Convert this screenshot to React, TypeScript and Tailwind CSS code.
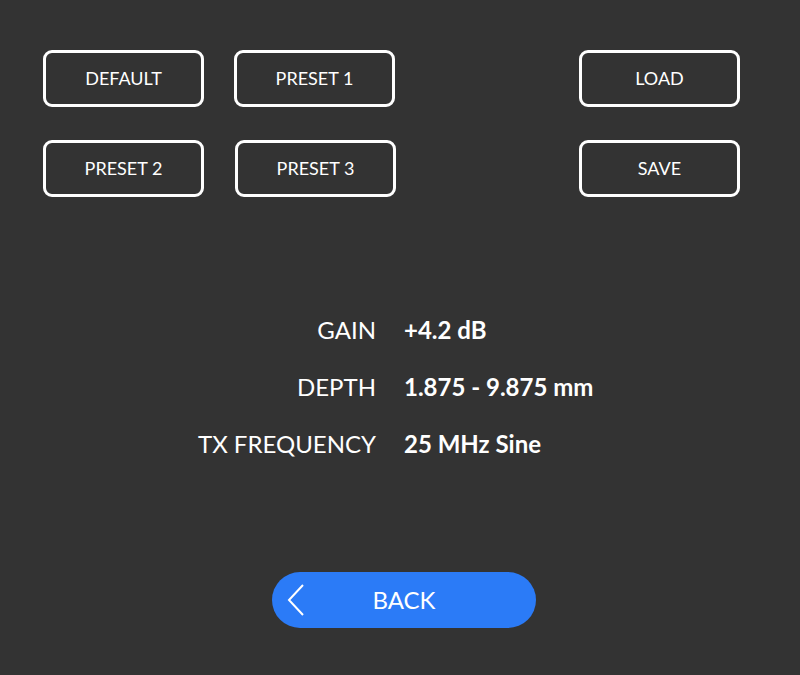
import { ReactNode } from 'react';

const OutlineButton = ({ children, className = '' }: { children: ReactNode; className?: string }) => (
	<button
		className={`w-[161px] h-[57px] rounded-[9px] border-[3px] border-white text-[18px] text-white flex items-center justify-center ${className}`}
	>
		{children}
	</button>
);

const rows = [
	{ label: 'GAIN', value: '+4.2 dB' },
	{ label: 'DEPTH', value: '1.875 - 9.875 mm' },
	{ label: 'TX FREQUENCY', value: '25 MHz Sine' },
];

export default function App() {
	return (
		<main
			className="w-[800px] h-[675px] bg-[#333333] text-white flex flex-col"
			style={{ fontFamily: 'Lato, "Open Sans", sans-serif' }}
		>
			<div className="pt-[50px] pl-[43px] pr-[60px] flex flex-col gap-[33px]">
				<div className="flex">
					<OutlineButton>DEFAULT</OutlineButton>
					<OutlineButton className="ml-[30px]">PRESET 1</OutlineButton>
					<OutlineButton className="ml-auto">LOAD</OutlineButton>
				</div>
				<div className="flex">
					<OutlineButton>PRESET 2</OutlineButton>
					<OutlineButton className="ml-[31px]">PRESET 3</OutlineButton>
					<OutlineButton className="ml-auto">SAVE</OutlineButton>
				</div>
			</div>

			<div className="mt-[116px] grid grid-cols-[376px_1fr] gap-x-[28px] gap-y-[24px] text-[24px] leading-[33px]">
				{rows.map((row) => (
					<div key={row.label} className="contents">
						<span className="text-right">{row.label}</span>
						<span className="font-bold">{row.value}</span>
					</div>
				))}
			</div>

			<div className="mt-[112px] pl-[272px]">
				<button className="relative w-[264px] h-[56px] rounded-full bg-[#2b7bf7] flex items-center justify-center text-[24px] text-white">
					<svg
						className="absolute left-[14px] top-[12px]"
						width="20"
						height="32"
						viewBox="0 0 20 32"
						fill="none"
						stroke="white"
						strokeWidth="2"
					>
						<path d="M17 1 L3 16 L17 31" />
					</svg>
					BACK
				</button>
			</div>
		</main>
	);
}
